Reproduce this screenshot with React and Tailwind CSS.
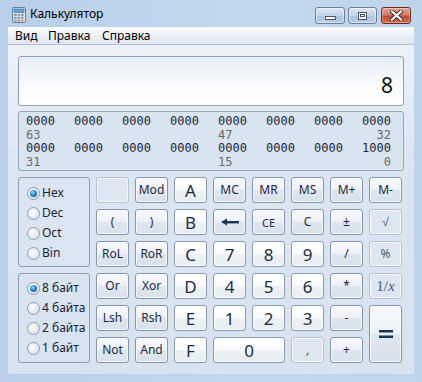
import React from "react";

const NORMAL =
  "border-[#8597b0] bg-[linear-gradient(to_bottom,#f7f9fc_0%,#eef2f8_48%,#dfe6f0_52%,#d9e1ec_100%)] text-[#1d2b40]";
const DIGIT =
  "border-[#8a9bb3] bg-[linear-gradient(to_bottom,#ffffff_0%,#f9fbfd_48%,#eef2f7_52%,#e8edf4_100%)] text-[#1d2b40]";
const DISABLED = "border-[#b4c2d5] bg-[#dde6f1] text-[#4e5c70]";

function Btn({ children, kind = "n", className = "", size = "text-[12px]" }) {
  const k = kind === "d" ? DIGIT : kind === "x" ? DISABLED : NORMAL;
  return (
    <div
      className={`rounded-[3px] border flex items-center justify-center leading-none shadow-[inset_0_0_0_1px_rgba(255,255,255,0.75)] ${k} ${size} ${className}`}
    >
      {children}
    </div>
  );
}

function Radio({ checked, label }) {
  return (
    <div className="flex items-center h-[20px]">
      <span className="w-[13px] h-[13px] rounded-full border border-[#8e9db1] bg-[radial-gradient(circle_at_40%_35%,#ffffff,#d3d9e1)] flex items-center justify-center">
        {checked && (
          <span className="w-[7px] h-[7px] rounded-full bg-[radial-gradient(circle_at_40%_35%,#8ad6ff,#1d74bd_60%,#0a3d75)]" />
        )}
      </span>
      <span className="ml-[2px] text-[12px] text-[#1b2433] leading-none">{label}</span>
    </div>
  );
}

function CalcIcon() {
  return (
    <svg width="16" height="16" viewBox="0 0 16 16">
      <rect x="1.5" y="0.5" width="13" height="15" rx="1.5" fill="#dfe6ee" stroke="#6f7f93" />
      <rect x="3" y="2" width="10" height="3.5" fill="#5fa3dc" stroke="#3a6f9f" strokeWidth="0.6" />
      {[0, 1, 2].map((r) =>
        [0, 1, 2].map((c) => (
          <rect
            key={`${r}-${c}`}
            x={3 + c * 3.5}
            y={7 + r * 2.8}
            width="2.6"
            height="2"
            fill={r === 2 && c === 2 ? "#f0a030" : "#8d9aab"}
          />
        ))
      )}
    </svg>
  );
}

function BackArrow() {
  return (
    <svg width="18" height="8" viewBox="0 0 18 8">
      <polygon points="0,4 6,0.5 6,7.5" fill="#1c3458" />
      <rect x="5" y="3" width="13" height="2.4" fill="#1c3458" />
    </svg>
  );
}

function Equals() {
  return (
    <svg width="14" height="8" viewBox="0 0 14 8">
      <rect x="0" y="0" width="14" height="2.5" fill="#1c3458" />
      <rect x="0" y="5.5" width="14" height="2.5" fill="#1c3458" />
    </svg>
  );
}

export default function App() {
  const groups = ["0000", "0000", "0000", "0000", "0000", "0000", "0000", "0000"];
  const groups2 = ["0000", "0000", "0000", "0000", "0000", "0000", "0000", "1000"];
  return (
    <div className="w-[422px] h-[382px] flex flex-col bg-[linear-gradient(to_right,#b9cfe9,#c3d7ee_60%,#bfd3eb)] font-['Noto_Sans',sans-serif] overflow-hidden">
      {/* Title bar */}
      <div className="h-[27px] flex items-start shrink-0">
        <div className="ml-[11px] mt-[7px]">
          <CalcIcon />
        </div>
        <div className="ml-[3px] mt-[6px] text-[12px] leading-[16px] text-black">Калькулятор</div>
        <div className="ml-auto mr-[11px] mt-[7px] flex">
          <div className="w-[30px] h-[17px] rounded-[3px] border border-[#6c7f99] bg-[linear-gradient(to_bottom,#dce7f4,#c1d3e9_50%,#acc3df_51%,#b9cde6)] flex items-center justify-center shadow-[inset_0_0_0_1px_rgba(255,255,255,0.5)]">
            <div className="w-[11px] h-[4px] bg-white border border-[#4a5566] mt-[4px]" />
          </div>
          <div className="ml-[3px] w-[29px] h-[17px] rounded-[3px] border border-[#6c7f99] bg-[linear-gradient(to_bottom,#dce7f4,#c1d3e9_50%,#acc3df_51%,#b9cde6)] flex items-center justify-center shadow-[inset_0_0_0_1px_rgba(255,255,255,0.5)]">
            <div className="w-[9px] h-[8px] border border-[#4a5566] bg-[#eef3f9] flex items-center justify-center">
              <div className="w-[5px] h-[3px] border border-[#4a5566]" />
            </div>
          </div>
          <div className="ml-[4px] w-[30px] h-[17px] rounded-[3px] border border-[#6a2a22] bg-[linear-gradient(to_bottom,#e8a493,#d47a65_45%,#c14a33_55%,#d36a50)] flex items-center justify-center shadow-[inset_0_0_0_1px_rgba(255,255,255,0.35)]">
            <svg width="13" height="11" viewBox="0 0 13 11">
              <path d="M2 1.5 L11 9.5 M11 1.5 L2 9.5" stroke="#3a2a2a" strokeWidth="4" strokeLinecap="square" />
              <path d="M2 1.5 L11 9.5 M11 1.5 L2 9.5" stroke="#ffffff" strokeWidth="2.2" strokeLinecap="square" />
            </svg>
          </div>
        </div>
      </div>

      {/* Client area */}
      <div className="mx-[8px] mb-[8px] flex-1 flex flex-col">
        {/* Menu */}
        <div className="h-[18px] flex items-center pl-[7px] text-[12px] text-black bg-[linear-gradient(to_bottom,#fbfcfe,#e9eef6_60%,#dfe6f1)] border-b border-[#b4c1d3] shrink-0">
          <span className="w-[33px]">Вид</span>
          <span className="w-[54px]">Правка</span>
          <span>Справка</span>
        </div>

        <div className="flex-1 flex flex-col px-[10px] pt-[11px] bg-[linear-gradient(to_bottom,#edf2f9,#dce6f2_35%,#d9e3f0)]">
          {/* Display */}
          <div className="h-[50px] rounded-[3px] border border-[#8d9fb7] bg-[linear-gradient(to_bottom,#e6edf6,#f6f8fc_45%,#ffffff)] flex items-center justify-end pr-[10px] pt-[9px]">
            <span className="text-[21px] leading-none text-[#111]">8</span>
          </div>

          {/* Binary */}
          <div className="mt-[5px] h-[60px] rounded-[3px] border border-[#95a6bc] bg-[#dae4f1] pl-[7px] pt-[3px] font-['DejaVu_Sans_Mono',monospace] text-[12px] leading-[13.5px]">
            <div className="grid grid-cols-[repeat(7,48px)_29px] text-[#1d2a3c]">
              {groups.map((g, i) => (
                <span key={i}>{g}</span>
              ))}
            </div>
            <div className="grid grid-cols-[repeat(7,48px)_29px] text-[#6b6b6b]">
              <span>63</span>
              <span />
              <span />
              <span />
              <span>47</span>
              <span />
              <span />
              <span className="text-right">32</span>
            </div>
            <div className="grid grid-cols-[repeat(7,48px)_29px] text-[#1d2a3c]">
              {groups2.map((g, i) => (
                <span key={i}>{g}</span>
              ))}
            </div>
            <div className="grid grid-cols-[repeat(7,48px)_29px] text-[#6b6b6b]">
              <span>31</span>
              <span />
              <span />
              <span />
              <span>15</span>
              <span />
              <span />
              <span className="text-right">0</span>
            </div>
          </div>

          {/* Keypad */}
          <div className="mt-[6px] grid grid-cols-[72px_repeat(8,33px)] grid-rows-[repeat(6,26px)] gap-[6px]">
            <div className="row-span-3 rounded-[3px] border border-[#8fa1b8] pl-[8px] pt-[5px]">
              <Radio checked label="Hex" />
              <Radio label="Dec" />
              <Radio label="Oct" />
              <Radio label="Bin" />
            </div>
            {/* row 1 */}
            <Btn kind="x" />
            <Btn>Mod</Btn>
            <Btn kind="d" size="text-[17px]">A</Btn>
            <Btn>MC</Btn>
            <Btn>MR</Btn>
            <Btn>MS</Btn>
            <Btn>M+</Btn>
            <Btn>M-</Btn>
            {/* row 2 */}
            <Btn>(</Btn>
            <Btn>)</Btn>
            <Btn kind="d" size="text-[17px]">B</Btn>
            <Btn>
              <BackArrow />
            </Btn>
            <Btn size="text-[11px]">CE</Btn>
            <Btn>C</Btn>
            <Btn>±</Btn>
            <Btn kind="x">√</Btn>
            {/* row 3 */}
            <Btn>RoL</Btn>
            <Btn>RoR</Btn>
            <Btn kind="d" size="text-[17px]">C</Btn>
            <Btn kind="d" size="text-[17px]">7</Btn>
            <Btn kind="d" size="text-[17px]">8</Btn>
            <Btn kind="d" size="text-[17px]">9</Btn>
            <Btn>/</Btn>
            <Btn kind="x">%</Btn>

            <div className="row-span-3 rounded-[3px] border border-[#8fa1b8] pl-[8px] pt-[4px]">
              <Radio checked label="8 байт" />
              <Radio label="4 байта" />
              <Radio label="2 байта" />
              <Radio label="1 байт" />
            </div>
            {/* row 4 */}
            <Btn>Or</Btn>
            <Btn>Xor</Btn>
            <Btn kind="d" size="text-[17px]">D</Btn>
            <Btn kind="d" size="text-[17px]">4</Btn>
            <Btn kind="d" size="text-[17px]">5</Btn>
            <Btn kind="d" size="text-[17px]">6</Btn>
            <Btn>*</Btn>
            <Btn kind="x" className="font-['Liberation_Serif',serif] text-[#2a3446]" size="text-[15px]">
              1/<i>x</i>
            </Btn>
            {/* row 5 */}
            <Btn>Lsh</Btn>
            <Btn>Rsh</Btn>
            <Btn kind="d" size="text-[17px]">E</Btn>
            <Btn kind="d" size="text-[17px]">1</Btn>
            <Btn kind="d" size="text-[17px]">2</Btn>
            <Btn kind="d" size="text-[17px]">3</Btn>
            <Btn>-</Btn>
            <Btn className="row-span-2">
              <Equals />
            </Btn>
            {/* row 6 */}
            <Btn>Not</Btn>
            <Btn>And</Btn>
            <Btn kind="d" size="text-[17px]">F</Btn>
            <Btn kind="d" size="text-[17px]" className="col-span-2">0</Btn>
            <Btn kind="x">,</Btn>
            <Btn>+</Btn>
          </div>
        </div>
      </div>
    </div>
  );
}
